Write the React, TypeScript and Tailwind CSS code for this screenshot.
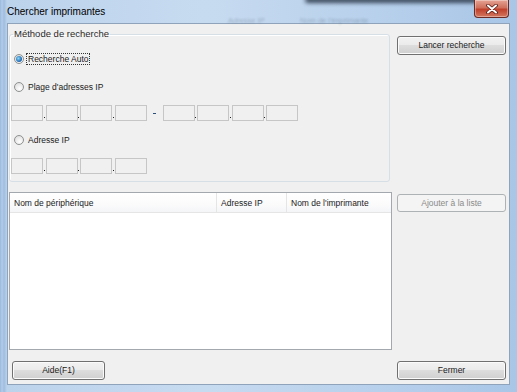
import React from 'react';

const FONT = { fontFamily: '"Liberation Sans", Arial, sans-serif' };

const Button: React.FC<{ label: string; className?: string; disabled?: boolean }> = ({ label, className = '', disabled }) => (
  <div
    className={`flex items-center justify-center rounded-[3px] border text-[8.5px] leading-none ${
      disabled
        ? 'border-[#adb2b5] bg-[#f4f4f4] text-[#8a8a8a]'
        : 'border-[#707070] bg-[linear-gradient(#f2f2f2,#ebebeb_45%,#dddddd_50%,#cfcfcf)] text-[#1a1a1a] shadow-[inset_0_0_0_1px_#fbfbfb]'
    } ${className}`}
  >
    {label}
  </div>
);

const Radio: React.FC<{ checked?: boolean }> = ({ checked }) => (
  <div className="flex h-[10px] w-[10px] items-center justify-center rounded-full border border-[#8e8f8f] bg-[radial-gradient(circle_at_60%_70%,#ffffff,#d8d8d8)]">
    {checked && (
      <div className="h-[6px] w-[6px] rounded-full bg-[radial-gradient(circle_at_40%_40%,#8ad8f8,#1d68b4_65%,#0c3f7c)]" />
    )}
  </div>
);

const IpBox: React.FC = () => <div className="h-[16px] w-[32px] border border-[#c6c6c6] bg-[#f0f0f0]" />;

const Dot: React.FC = () => (
  <div className="flex h-[16px] w-[2.5px] items-end justify-center pb-[3px]">
    <div className="h-[1px] w-[1px] bg-[#202020]" />
  </div>
);

const IpField: React.FC = () => (
  <div className="flex">
    <IpBox />
    <Dot />
    <IpBox />
    <Dot />
    <IpBox />
    <Dot />
    <IpBox />
  </div>
);

const App: React.FC = () => {
  return (
    <div
      className="relative flex h-[392px] w-[517px] flex-col overflow-hidden bg-[linear-gradient(90deg,#98b8de,#b3cce9_2px,#9fbde0_4px,#bcd3ec_7px,#c7dbf0_40%,#b9d1ec_70%,#a9c6e7)]"
      style={FONT}
    >
      {/* windows behind the glass */}
      <div className="pointer-events-none absolute left-[305px] top-[-3px] h-[6px] w-[175px] rounded-full bg-[#1c2838] opacity-80 blur-[2px]" />
      <div className="pointer-events-none absolute left-[228px] top-[15px] text-[7.5px] text-[#3a4a60] opacity-30 blur-[1px]">Adresse IP</div>
      <div className="pointer-events-none absolute left-[300px] top-[15px] text-[7.5px] text-[#3a4a60] opacity-30 blur-[1px]">Nom de l'imprimante</div>

      {/* Title bar */}
      <div className="relative flex h-[23px] shrink-0 items-start justify-between">
        <div className="pl-[7px] pt-[6px] text-[10px] leading-[12px] text-black">Chercher imprimantes</div>
        <div className="mr-[8px] flex h-[18px] w-[35px] items-center justify-center rounded-b-[4px] border border-t-0 border-[#6b2a24] bg-[linear-gradient(#e6a394,#d0705d_45%,#c0412c_55%,#d3775f)] shadow-[inset_0_0_0_1px_rgba(255,255,255,0.35)]">
          <svg width="12" height="10" viewBox="0 0 12 10">
            <path d="M2 1.5 L10 8.5 M10 1.5 L2 8.5" stroke="#5a1a12" strokeWidth="3.6" strokeLinecap="round" />
            <path d="M2 1.5 L10 8.5 M10 1.5 L2 8.5" stroke="#ffffff" strokeWidth="2" strokeLinecap="round" />
          </svg>
        </div>
      </div>

      {/* Client area */}
      <div className="mx-[7px] flex h-[362px] flex-col border border-[#8fa3bb] bg-[#f0f0f0] pl-[1px] pt-[4px] text-[8.5px] leading-[12px] text-[#1a1a1a]">
        {/* Search method */}
        <div className="flex items-start">
          <fieldset className="h-[154px] w-[381px] rounded-[3px] border border-[#d5dfe5] shadow-[inset_1px_1px_0_#ffffff]">
            <legend className="ml-[3px] px-[1px] text-[9.5px] leading-[12px] text-[#2a2a2a]">Méthode de recherche</legend>
            <div className="flex flex-col pl-[4px]">
              <div className="mt-[13px] flex h-[12px] items-center">
                <Radio checked />
                <span className="ml-[2px] border border-dotted border-[#333] px-[1px] leading-[10px]">Recherche Auto</span>
              </div>
              <div className="mt-[16px] flex h-[12px] items-center">
                <Radio />
                <span className="ml-[4px]">Plage d'adresses IP</span>
              </div>
              <div className="ml-[-3px] mt-[12px] flex items-center">
                <IpField />
                <div className="mx-[6px] flex w-[4px] justify-center">
                  <div className="h-[1px] w-[3px] bg-[#2b4f7a]" />
                </div>
                <IpField />
              </div>
              <div className="mt-[13px] flex h-[12px] items-center">
                <Radio />
                <span className="ml-[4px]">Adresse IP</span>
              </div>
              <div className="ml-[-3px] mt-[12px] flex">
                <IpField />
              </div>
            </div>
          </fieldset>
          <Button label="Lancer recherche" className="ml-[7px] mt-[8px] h-[19px] w-[109px]" />
        </div>

        {/* Results */}
        <div className="mt-[10px] flex items-start">
          <div className="flex h-[158px] w-[383px] flex-col border border-[#a3a8ae] bg-white">
            <div className="flex h-[20px] items-stretch border-b border-[#e5e5e5] bg-[linear-gradient(#ffffff,#fbfbfc_60%,#f4f5f7)]">
              <div className="flex w-[207px] items-center border-r border-[#e5e5e5] pl-[4px]">Nom de périphérique</div>
              <div className="flex w-[70px] items-center border-r border-[#e5e5e5] pl-[4px]">Adresse IP</div>
              <div className="flex flex-1 items-center pl-[4px]">Nom de l'imprimante</div>
            </div>
          </div>
          <Button label="Ajouter à la liste" disabled className="ml-[5px] mt-[2px] h-[18px] w-[109px]" />
        </div>

        {/* Bottom buttons */}
        <div className="mt-[11px] flex items-start justify-between pr-[3px]">
          <Button label="Aide(F1)" className="ml-[3px] h-[19px] w-[93px]" />
          <Button label="Fermer" className="h-[19px] w-[109px]" />
        </div>
      </div>
    </div>
  );
};

export default App;
